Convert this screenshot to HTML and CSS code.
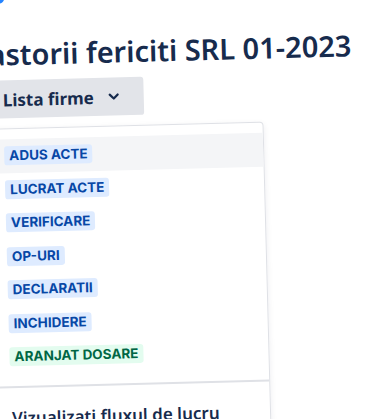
FILE: index.html
```html
<!DOCTYPE html>
<html lang="ro">
<head>
<meta charset="UTF-8" />
<meta name="viewport" content="width=device-width, initial-scale=1.0" />
<title>Pastorii fericiti SRL</title>
<link rel="stylesheet" href="styles.css">
</head>
<body>

<div class="page">
  <div class="app-dot"></div>

  <h1 class="title">Pastorii fericiti SRL 01-2023</h1>

  <button class="menu-btn">
    Lista firme
    <svg class="chevron" width="12" height="8" viewBox="0 0 12 8">
      <path d="M2 2l4 4 4-4" fill="none" stroke="#172b4d" stroke-width="2.2" stroke-linecap="round" stroke-linejoin="round"/>
    </svg>
  </button>

  <div class="dropdown">
    <ul class="status-list">
      <li class="status-item active"><span class="lozenge blue">ADUS ACTE</span></li>
      <li class="status-item"><span class="lozenge blue">LUCRAT ACTE</span></li>
      <li class="status-item"><span class="lozenge blue">VERIFICARE</span></li>
      <li class="status-item"><span class="lozenge blue">OP-URI</span></li>
      <li class="status-item"><span class="lozenge blue">DECLARATII</span></li>
      <li class="status-item"><span class="lozenge blue">INCHIDERE</span></li>
      <li class="status-item"><span class="lozenge green">ARANJAT DOSARE</span></li>
    </ul>
    <div class="dropdown-footer">Vizualizati fluxul de lucru</div>
  </div>
</div>

</body>
</html>
```

FILE: styles.css
```css
body {
  margin: 0;
  background-color: #fff;
  color: #172b4d;
  font-family: 'Noto Sans', 'Open Sans', sans-serif;
  overflow: hidden;
}

.page {
  margin-left: -20px;
  width: 300px;
  transform: rotate(-1.5deg);
  transform-origin: 0 0;
}

.app-dot {
  width: 10px;
  height: 10px;
  margin: -6px 0 0 14px;
  border-radius: 50%;
  background-color: #2684ff;
}

.title {
  margin: 33px 0 0 -11px;
  font-size: 29px;
  font-weight: 600;
  line-height: 36px;
  white-space: nowrap;
  color: #172b4d;
}

.menu-btn {
  display: flex;
  align-items: center;
  gap: 14px;
  height: 38px;
  margin-top: 8px;
  padding: 0 24px 0 20px;
  border: none;
  border-radius: 3px;
  background-color: #e2e4e9;
  color: #172b4d;
  font-family: inherit;
  font-size: 17px;
  font-weight: 700;
}

.dropdown {
  width: 278px;
  margin-top: 10px;
  border: 1px solid #dfe1e6;
  border-radius: 4px;
  box-shadow: 0 2px 6px rgba(9, 30, 66, 0.08);
}

.status-list {
  list-style: none;
  margin: 0;
  padding: 10px 0 12px 0;
}

.status-item {
  display: flex;
  align-items: center;
  height: 33.5px;
  padding-left: 19px;
}

.status-item.active {
  background-color: #f4f5f7;
}

.lozenge {
  display: inline-block;
  padding: 0 5px;
  height: 19px;
  line-height: 19px;
  border-radius: 3px;
  font-family: Inter, 'Liberation Sans', sans-serif;
  font-size: 13.5px;
  font-weight: 700;
}

.lozenge.blue {
  background-color: #deebff;
  color: #0747a6;
}

.lozenge.green {
  background-color: #e3fcef;
  color: #006644;
}

.dropdown-footer {
  border-top: 2px solid #dfe1e6;
  padding: 18px 18px 14px 20px;
  font-size: 17px;
  font-weight: 600;
}
```
